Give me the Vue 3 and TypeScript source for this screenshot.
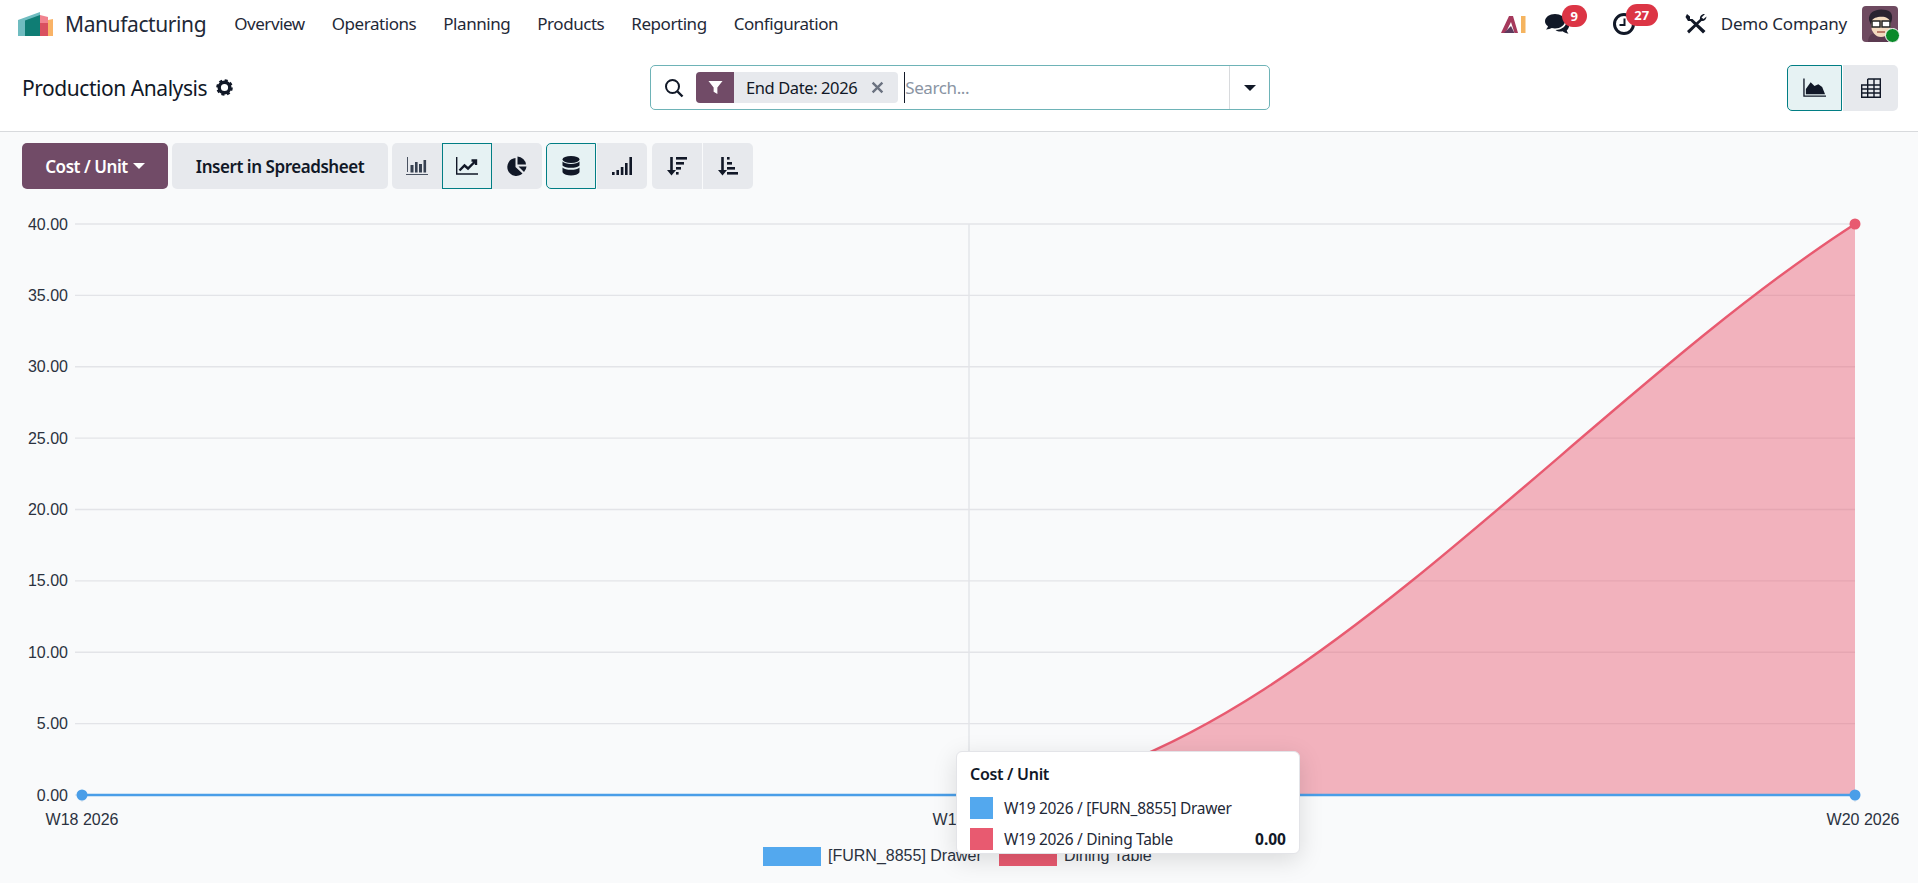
<script setup lang="ts">
import { computed } from 'vue';

const navItems = ['Overview', 'Operations', 'Planning', 'Products', 'Reporting', 'Configuration'];

// chart geometry, in page pixels
const top = 225;
const bottom = 796;
const xs = [82, 969, 1855];
const ticks = computed(() =>
  Array.from({ length: 9 }, (_, i) => ({
    label: (i * 5).toFixed(2),
    y: bottom - (i * (bottom - top)) / 8,
  })),
);
const curve = `M${xs[1]} ${bottom} C1264 ${bottom} 1560 415 ${xs[2]} ${top}`;
const area = `${curve} L${xs[2]} ${bottom} Z`;
const weeks = ['W18 2026', 'W19 2026', 'W20 2026'];

const rows = [
  { label: 'W19 2026 / [FURN_8855] Drawer', color: '#53a8ee', value: '' },
  { label: 'W19 2026 / Dining Table', color: '#e85a70', value: '0.00' },
];
</script>

<template>
  <div class="app">
    <header class="navbar">
      <svg class="logo" viewBox="0 0 37 26" width="37" height="26">
        <polygon points="1,9 23,1 23,25 1,25" fill="#6fbcc0" />
        <polygon points="8,9.5 23,4 23,25 8,25" fill="#0f7d74" />
        <polygon points="23,4 31,6 31,25 23,25" fill="#f1838f" />
        <polygon points="23,12 31,12 31,25 23,25" fill="#d9505f" />
        <polygon points="31,9 36,8 36,25 31,25" fill="#f9b367" />
      </svg>
      <span class="app-name">Manufacturing</span>
      <nav class="menu">
        <a v-for="item in navItems" :key="item">{{ item }}</a>
      </nav>
      <div class="systray">
        <svg class="ai" viewBox="0 0 26 18" width="26" height="18">
          <path d="M0 18 L8 1 H12 L17 18 H13.5 L10 7 L4.5 18 Z" fill="#a5395c" />
          <path d="M3 18 L10 11 L13.5 18 Z" fill="#5d3b5e" />
          <rect x="20" y="1" width="4.5" height="17" fill="#f5b45f" />
        </svg>
        <span class="tray-icon chat">
          <svg viewBox="0 0 26 22" width="26" height="22">
            <path d="M10 1 C4.5 1 0 4.2 0 8.2 C0 10.2 1.1 12 3 13.3 C2.7 14.6 2 15.7 1 16.5 C3.4 16.3 5.4 15.5 6.8 14.9 C7.8 15.2 8.9 15.4 10 15.4 C15.5 15.4 20 12.2 20 8.2 C20 4.2 15.5 1 10 1 Z" fill="#111827" />
            <path d="M21.5 7.5 C22 12.5 17 17 10.5 17 C12.5 18.5 15 18.8 17.5 18.3 C19 19.2 21 20.5 23.5 20.7 C22.5 19.7 22 18.5 21.8 17.3 C24.5 15.5 25.5 10 21.5 7.5 Z" fill="#111827" />
          </svg>
          <b class="badge">9</b>
        </span>
        <span class="tray-icon clock">
          <svg viewBox="0 0 24 24" width="24" height="24">
            <circle cx="12" cy="12" r="9.5" fill="none" stroke="#111827" stroke-width="3" />
            <path d="M12.5 6.5 V13 H7.5" fill="none" stroke="#111827" stroke-width="2" />
          </svg>
          <b class="badge">27</b>
        </span>
        <svg class="tools" viewBox="0 0 22 22" width="22" height="22">
          <path d="M2 1 L5 3.5 V6 L7.5 6 L20.5 18 L18 20.5 L5.5 8 H3 L0.5 4 Z" fill="#111827" />
          <path d="M20 1 C17 0.5 14.5 3 15 6 L2 18 L4 20.5 L16.5 8 C19 8.5 21.5 6.5 21.5 3.5 L18.5 6 L16.5 4.5 Z" fill="#111827" />
        </svg>
        <span class="company">Demo Company</span>
        <span class="avatar">
          <svg viewBox="0 0 36 36" width="36" height="36">
            <rect width="36" height="36" rx="4" fill="#6e4a60" />
            <path d="M6 36 C6 28 12 26 20 26 C28 26 33 30 33 36 Z" fill="#5b3a50" />
            <ellipse cx="19" cy="19" rx="10" ry="12" fill="#f3d9bf" />
            <path d="M7 14 C6 5 16 2 24 4 C31 5 31 12 29 17 C27 11 22 10 16 11 C12 12 9 13 9 19 Z" fill="#2a2230" />
            <rect x="10" y="15" width="8" height="6" fill="#fff" stroke="#222" stroke-width="1.5" />
            <rect x="20" y="15" width="8" height="6" fill="#fff" stroke="#222" stroke-width="1.5" />
            <path d="M15 26 H23" stroke="#a65a4d" stroke-width="1.5" />
          </svg>
          <i class="online"></i>
        </span>
      </div>
    </header>

    <section class="control-panel">
      <div class="title">
        <span>Production Analysis</span>
        <svg viewBox="0 0 18 18" width="17" height="17">
          <circle cx="9" cy="9" r="5.6" fill="none" stroke="#111827" stroke-width="3.6" />
          <circle cx="9" cy="9" r="7.6" fill="none" stroke="#111827" stroke-width="2.4" stroke-dasharray="3.2 2.77" />
        </svg>
      </div>
      <div class="search">
        <svg class="search-icon" viewBox="0 0 20 20" width="20" height="20">
          <circle cx="8.5" cy="8.5" r="6.5" fill="none" stroke="#111827" stroke-width="2" />
          <path d="M13.5 13.5 L18.5 18.5" stroke="#111827" stroke-width="2.4" />
        </svg>
        <div class="facet">
          <span class="facet-icon">
            <svg viewBox="0 0 16 16" width="15" height="15">
              <path d="M0.5 1 H15.5 L10 8 V15 L6 12.5 V8 Z" fill="#fff" />
            </svg>
          </span>
          <span class="facet-label">End Date: 2026</span>
          <svg class="facet-x" viewBox="0 0 12 12" width="13" height="13">
            <path d="M1.5 1.5 L10.5 10.5 M10.5 1.5 L1.5 10.5" stroke="#6b7280" stroke-width="2.2" />
          </svg>
        </div>
        <input class="search-input" type="text" placeholder="Search..." />
        <button class="search-more" type="button"><i class="caret"></i></button>
      </div>
      <div class="switch">
        <button class="btn icon active" type="button">
          <svg viewBox="0 0 24 20" width="24" height="20">
            <path d="M1 0 V18.5 H24" fill="none" stroke="#111827" stroke-width="1.4" />
            <path d="M3 16.5 V11 L8 4 L12 8 L16 6 L20 9 L23 16.5 Z" fill="#111827" />
          </svg>
        </button>
        <button class="btn icon" type="button">
          <svg viewBox="0 0 20 20" width="20" height="20" fill="none" stroke="#111827" stroke-width="1.4">
            <path d="M0.7 7 H19.3 V19.3 H0.7 Z M6.7 1 H19.3 V7 M6.7 1 V19.3 M13 1 V19.3 M0.7 11 H19.3 M0.7 15 H19.3" />
          </svg>
        </button>
      </div>
    </section>

    <main class="content">
      <div class="toolbar">
        <button class="btn primary" type="button">Cost / Unit <i class="caret white"></i></button>
        <button class="btn" type="button">Insert in Spreadsheet</button>
        <div class="group">
          <button class="btn icon" type="button">
            <svg viewBox="0 0 22 18" width="22" height="18" fill="#374151">
              <path d="M0 17 H22 V18 H0 Z M1 0 H2 V15 H1 Z" opacity=".9" />
              <rect x="4.5" y="8" width="3" height="7.5" /><rect x="9" y="5" width="2.6" height="10.5" />
              <rect x="13" y="7" width="3" height="8.5" /><rect x="17.5" y="3" width="2.6" height="12.5" />
            </svg>
          </button>
          <button class="btn icon active square" type="button">
            <svg viewBox="0 0 22 18" width="22" height="18">
              <path d="M0.7 0 V17 H22" fill="none" stroke="#111827" stroke-width="1.4" />
              <path d="M3.5 13.5 L8.5 8.5 L12 11.5 L19 4.5 M15.5 3.5 H20 V8" fill="none" stroke="#111827" stroke-width="2.4" />
            </svg>
          </button>
          <button class="btn icon" type="button">
            <svg viewBox="0 0 20 20" width="20" height="20" fill="#111827">
              <path d="M8.5 2 V11 L15.5 17.5 A9 9 0 1 1 8.5 2 Z" />
              <path d="M10.5 0.5 A9 9 0 0 1 19 8.5 H10.5 Z" />
              <path d="M11.5 10.5 H19.5 A9 9 0 0 1 17 16 Z" />
            </svg>
          </button>
        </div>
        <div class="group">
          <button class="btn icon active" type="button">
            <svg viewBox="0 0 18 20" width="18" height="20" fill="#111827">
              <ellipse cx="9" cy="3.5" rx="8.5" ry="3.4" />
              <path d="M0.5 5.6 C3 8.8 15 8.8 17.5 5.6 V9.4 C15 12.6 3 12.6 0.5 9.4 Z" />
              <path d="M0.5 11.4 C3 14.6 15 14.6 17.5 11.4 V16.2 C15 20.6 3 20.6 0.5 16.2 Z" />
            </svg>
          </button>
          <button class="btn icon" type="button">
            <svg viewBox="0 0 20 18" width="20" height="18" fill="#111827">
              <rect x="0" y="15" width="2.6" height="3" /><rect x="4.4" y="13" width="2.6" height="5" />
              <rect x="8.8" y="10" width="2.6" height="8" /><rect x="13" y="6" width="2.6" height="12" />
              <rect x="17.4" y="0" width="2.6" height="18" />
            </svg>
          </button>
        </div>
        <div class="group">
          <button class="btn icon" type="button">
            <svg viewBox="0 0 20 20" width="20" height="20" fill="#111827">
              <path d="M3.2 1 H5.8 V14 H9 L4.5 19.5 L0 14 H3.2 Z" />
              <rect x="9" y="1" width="11" height="2.6" /><rect x="9" y="6" width="8" height="2.6" />
              <rect x="9" y="11" width="5" height="2.6" /><rect x="9" y="16" width="2.6" height="2.6" />
            </svg>
          </button>
          <button class="btn icon" type="button">
            <svg viewBox="0 0 20 20" width="20" height="20" fill="#111827">
              <path d="M3.2 1 H5.8 V14 H9 L4.5 19.5 L0 14 H3.2 Z" />
              <rect x="9" y="1" width="2.6" height="2.6" /><rect x="9" y="6" width="5" height="2.6" />
              <rect x="9" y="11" width="8" height="2.6" /><rect x="9" y="16" width="11" height="2.6" />
            </svg>
          </button>
        </div>
      </div>

      <div class="chart">
        <svg class="plot" viewBox="0 190 1918 693" width="1918" height="693">
          <g v-for="tick in ticks" :key="tick.label">
            <line x1="75" :x2="xs[2]" :y1="tick.y" :y2="tick.y" class="grid" />
            <text x="68" :y="tick.y + 5.5" text-anchor="end" class="axis">{{ tick.label }}</text>
          </g>
          <line v-for="x in xs" :key="x" :x1="x" :x2="x" :y1="x === xs[1] ? top : bottom" :y2="bottom + 7" class="grid" />
          <path :d="area" fill="rgba(232, 90, 112, 0.45)" />
          <path :d="curve" fill="none" stroke="#e85a70" stroke-width="2.4" />
          <circle :cx="xs[2]" :cy="top" r="5.5" fill="#e85a70" />
          <line :x1="xs[0]" :x2="xs[2]" :y1="bottom" :y2="bottom" stroke="#4a9ee8" stroke-width="2.6" />
          <circle :cx="xs[0]" :cy="bottom" r="5.5" fill="#4a9ee8" />
          <circle :cx="xs[2]" :cy="bottom" r="5.5" fill="#4a9ee8" />
          <text v-for="(week, i) in weeks" :key="week" :x="xs[i] + (i === 0 ? 0 : i === 2 ? 8 : 0)" y="826" text-anchor="middle" class="axis">{{ week }}</text>
          <rect x="763" y="848" width="58" height="19" fill="#53a8ee" />
          <text x="828" y="862" class="axis">[FURN_8855] Drawer</text>
          <rect x="999" y="848" width="58" height="19" fill="#e85a70" />
          <text x="1064" y="862" class="axis">Dining Table</text>
        </svg>
        <div class="tooltip">
          <div class="tooltip-title">Cost / Unit</div>
          <div v-for="row in rows" :key="row.label" class="tooltip-row">
            <i class="swatch" :style="{ background: row.color }"></i>
            <span class="tooltip-label">{{ row.label }}</span>
            <b class="tooltip-value">{{ row.value }}</b>
          </div>
        </div>
      </div>
    </main>
  </div>
</template>

<style scoped>
.app {
  height: 883px;
  display: flex;
  flex-direction: column;
  overflow: hidden;
  background: #fff;
  color: #111827;
  font-family: 'Noto Sans', 'Open Sans', sans-serif;
}
.navbar {
  height: 47px;
  flex: none;
  display: flex;
  align-items: center;
  padding: 0 20px 0 17px;
}
.logo {
  margin-right: 11px;
}
.app-name {
  font-size: 21px;
  color: #1f2937;
  margin-right: 28px;
  letter-spacing: -0.4px;
}
.menu {
  display: flex;
  gap: 27px;
  font-size: 17px;
  color: #1f2937;
  letter-spacing: -0.45px;
}
.systray {
  margin-left: auto;
  display: flex;
  align-items: center;
}
.ai {
  margin-right: 18px;
}
.tray-icon {
  position: relative;
  display: flex;
}
.chat {
  margin-right: 41px;
}
.clock {
  margin-right: 49px;
}
.badge {
  position: absolute;
  top: -8px;
  left: 17px;
  height: 22px;
  min-width: 25px;
  padding: 0 7px;
  box-sizing: border-box;
  border-radius: 11px;
  background: #dc3545;
  color: #fff;
  font-size: 13px;
  font-weight: 700;
  line-height: 22px;
  text-align: center;
}
.clock .badge {
  left: 14px;
  min-width: 32px;
}
.tools {
  margin-right: 14px;
}
.company {
  font-size: 17px;
  margin-right: 15px;
  color: #1f2937;
  letter-spacing: -0.2px;
}
.avatar {
  position: relative;
  display: flex;
}
.online {
  position: absolute;
  right: -2px;
  bottom: -1px;
  width: 13px;
  height: 13px;
  border-radius: 50%;
  background: #0a8a2a;
  border: 1px solid #fff;
}
.control-panel {
  height: 85px;
  flex: none;
  box-sizing: border-box;
  border-bottom: 1px solid #d8dadd;
  display: flex;
  align-items: flex-start;
  padding: 18px 20px 0 22px;
}
.title {
  width: 628px;
  display: flex;
  align-items: center;
  gap: 9px;
  height: 45px;
  font-size: 21px;
  letter-spacing: -0.45px;
}
.search {
  width: 620px;
  height: 45px;
  box-sizing: border-box;
  border: 1px solid #6eb3b7;
  border-radius: 5px;
  display: flex;
  align-items: center;
  padding-left: 13px;
}
.search-icon {
  margin-right: 12px;
  flex: none;
}
.facet {
  height: 31px;
  display: flex;
  align-items: center;
  background: #e7e9ed;
  border-radius: 4px;
  overflow: hidden;
  flex: none;
}
.facet-icon {
  width: 38px;
  height: 100%;
  background: #714b67;
  display: flex;
  align-items: center;
  justify-content: center;
}
.facet-label {
  font-size: 16.5px;
  margin: 0 14px 0 12px;
  letter-spacing: -0.4px;
}
.facet-x {
  margin-right: 14px;
}
.search-input {
  flex: 1;
  min-width: 0;
  height: 31px;
  margin-left: 6px;
  padding: 0;
  border: none;
  border-left: 1px solid #111827;
  outline: none;
  font: inherit;
  font-size: 17px;
  letter-spacing: -0.4px;
}
.search-input::placeholder {
  color: #8a94a3;
}
.search-more {
  width: 40px;
  height: 100%;
  background: none;
  border: none;
  border-left: 1px solid #d8dadd;
  padding: 0;
  display: flex;
  align-items: center;
  justify-content: center;
}
.caret {
  display: inline-block;
  width: 0;
  height: 0;
  border-left: 6px solid transparent;
  border-right: 6px solid transparent;
  border-top: 6px solid #111827;
}
.caret.white {
  border-top-color: #fff;
  margin-left: 5px;
  vertical-align: middle;
}
.switch {
  margin-left: auto;
  display: flex;
}
.switch .btn {
  width: 55px;
}
.switch .btn:first-child {
  border-radius: 5px 0 0 5px;
}
.switch .btn:last-child {
  border-radius: 0 5px 5px 0;
  margin-left: 1px;
}
.content {
  flex: 1;
  min-height: 0;
  display: flex;
  flex-direction: column;
  background: #f9fafb;
}
.toolbar {
  display: flex;
  gap: 4px;
  padding: 11px 0 0 22px;
}
.btn {
  height: 46px;
  box-sizing: border-box;
  border: 1px solid transparent;
  border-radius: 5px;
  background: #e7e9ed;
  color: #111827;
  font: inherit;
  font-size: 17px;
  font-weight: 600;
  letter-spacing: -0.45px;
  padding: 0 15px;
  white-space: nowrap;
  display: flex;
  align-items: center;
  justify-content: center;
}
.primary {
  width: 146px;
  background: #714b67;
  color: #fff;
}
.toolbar > .btn:nth-child(2) {
  width: 216px;
}
.group {
  display: flex;
}
.group .btn {
  width: 50px;
  padding: 0;
  border-radius: 0;
}
.group .btn:first-child {
  border-radius: 5px 0 0 5px;
}
.group .btn:last-child {
  border-radius: 0 5px 5px 0;
}
.group + .group .btn {
  margin-right: 1px;
}
.active {
  background: #e6f2f3;
  border-color: #017e84;
}
.chart {
  position: relative;
  flex: 1;
  min-height: 0;
}
.plot {
  display: block;
}
.grid {
  stroke: #e3e4e8;
  stroke-width: 1.4;
}
.axis {
  font-family: 'Liberation Sans', Arial, sans-serif;
  font-size: 16px;
  fill: #2b3240;
}
.tooltip {
  position: absolute;
  left: 956px;
  top: 562px;
  width: 344px;
  height: 103px;
  box-sizing: border-box;
  padding: 11px 13px 0;
  background: #fff;
  border: 1px solid #e3e4e8;
  border-radius: 6px;
  box-shadow: 0 6px 24px rgba(0, 0, 0, 0.13);
}
.tooltip-title {
  font-size: 16px;
  font-weight: 600;
  letter-spacing: -0.3px;
  margin-bottom: 7px;
}
.tooltip-row {
  display: flex;
  align-items: center;
  height: 31px;
  font-size: 15.5px;
  letter-spacing: -0.3px;
  color: #1f2937;
}
.swatch {
  width: 23px;
  height: 22px;
  margin-right: 11px;
  flex: none;
}
.tooltip-value {
  margin-left: auto;
  color: #111827;
  letter-spacing: 0;
}
</style>

<style>
html,
body {
  margin: 0;
  background: #fff;
}
</style>
